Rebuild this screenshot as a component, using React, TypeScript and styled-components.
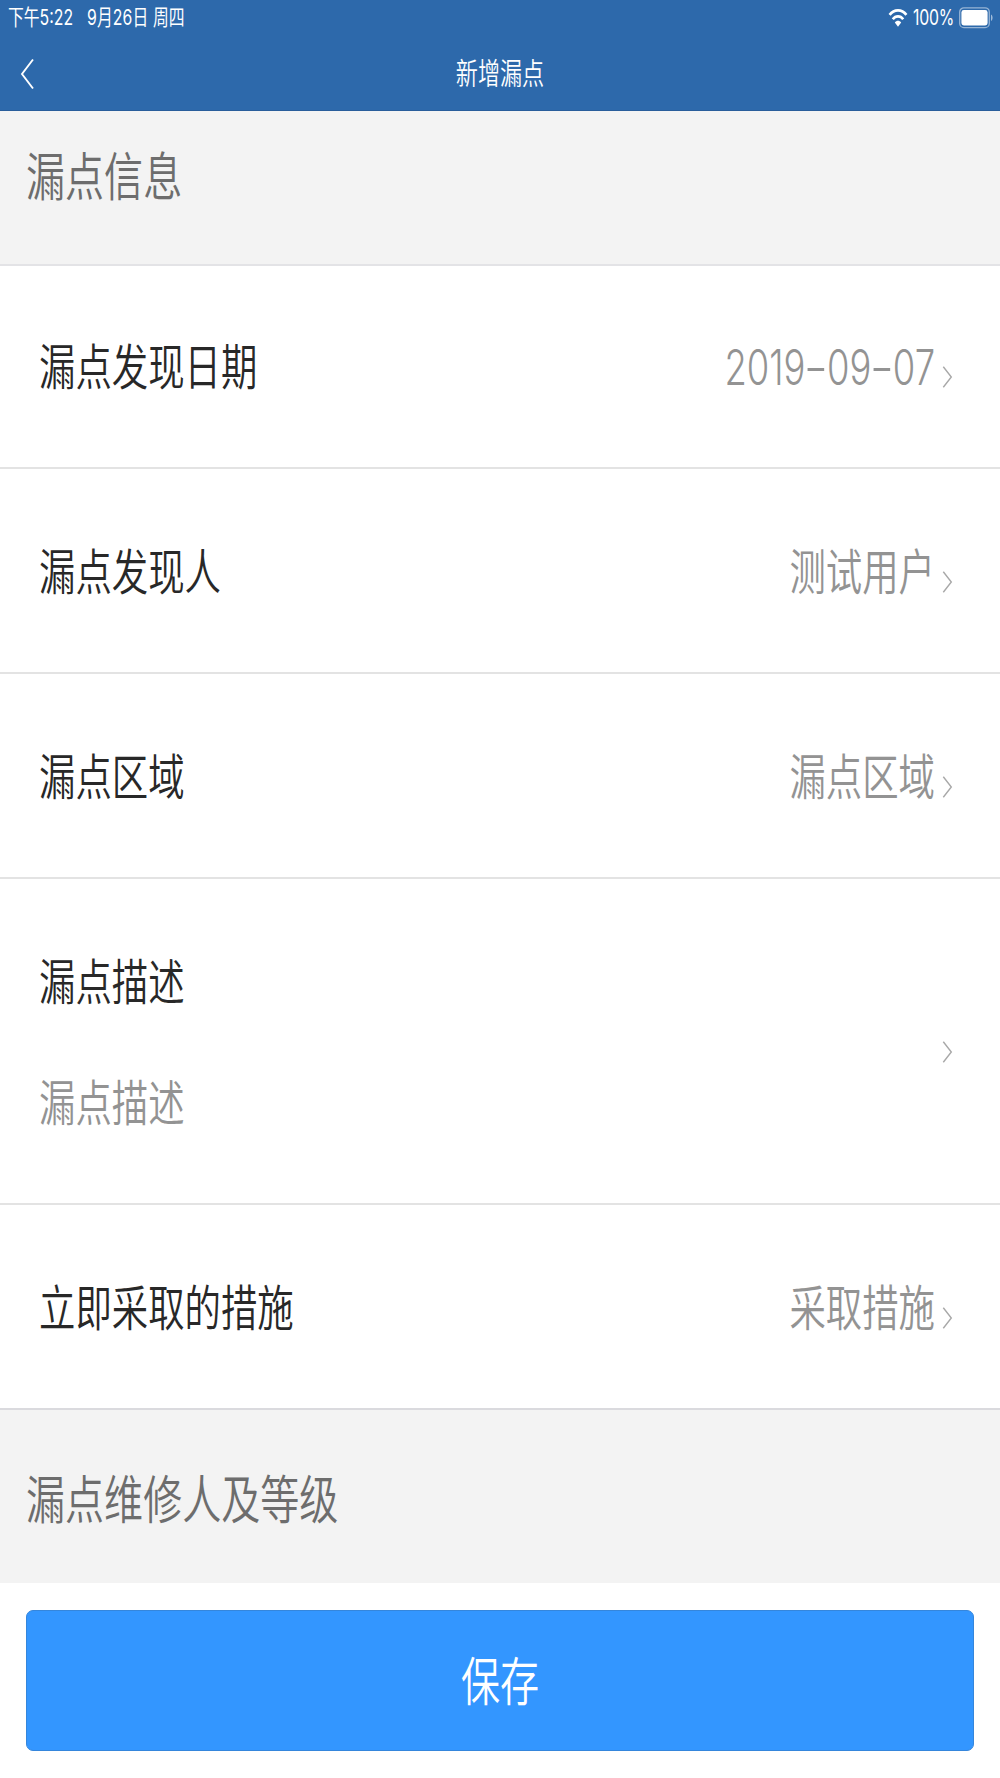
import React from "react";
import styled, { createGlobalStyle, css } from "styled-components";

const GlobalStyle = createGlobalStyle`
  *, *::before, *::after { box-sizing: border-box; }
  body { margin: 0; background: #fff; }
`;

const cjk = `"Noto Sans CJK SC", "Noto Sans", sans-serif`;

/* The interface is drawn with tall letterforms: every text run is stretched 4:3 vertically. */
const tall = css`
  display: block;
  white-space: nowrap;
  transform: scaleY(1.3333);
  transform-origin: 50% 50%;
`;

const Screen = styled.div`
  width: 1000px;
  height: 1778px;
  display: flex;
  flex-direction: column;
  overflow: hidden;
  background: #fff;
  font-family: ${cjk};
  font-weight: 350;
`;

const Header = styled.header`
  height: 111px;
  flex: none;
  background: #2d69ab;
  border-bottom: 1px solid #295d9b;
  color: #fff;
`;

const StatusBar = styled.div`
  height: 35px;
  padding: 0 6px 0 8px;
  display: flex;
  align-items: center;
  justify-content: space-between;
`;

const StatusGroup = styled.div<{ $gap: number }>`
  display: flex;
  align-items: center;
  gap: ${(p) => p.$gap}px;
`;

const StatusText = styled.span<{ $spacing?: number }>`
  ${tall}
  font-family: Inter, ${cjk};
  font-size: 15.8px;
  font-weight: 400;
  line-height: 21px;
  letter-spacing: ${(p) => p.$spacing ?? 0}px;
`;

const NavBar = styled.div`
  height: 75px;
  padding: 0 20px;
  display: grid;
  grid-template-columns: 60px 1fr 60px;
  align-items: start;
`;

const BackButton = styled.button`
  padding: 0;
  margin-top: 23px;
  width: 15px;
  height: 32px;
  border: 0;
  background: none;
  color: #fff;
  display: flex;
`;

const NavTitle = styled.h1`
  ${tall}
  margin: 19px 0 0;
  font-size: 22.1px;
  font-weight: 350;
  line-height: 34px;
  text-align: center;
`;

const Section = styled.div<{ $height: number; $top: number; $line?: boolean }>`
  height: ${(p) => p.$height}px;
  flex: none;
  padding: ${(p) => p.$top}px 26px 0;
  background: #f3f3f3;
  border-bottom: ${(p) => (p.$line ? "2px solid #e3e3e6" : "0")};
`;

const SectionTitle = styled.h2`
  ${tall}
  margin: 0;
  font-size: 39.06px;
  font-weight: 350;
  line-height: 52px;
  color: #6d6d6d;
`;

const Row = styled.div<{ $height: number; $top?: number; $last?: boolean }>`
  height: ${(p) => p.$height}px;
  flex: none;
  padding: ${(p) => p.$top ?? 76}px 47px 0 39px;
  display: flex;
  align-items: flex-start;
  border-bottom: 2px solid ${(p) => (p.$last ? "#dadade" : "#e3e3e3")};
`;

const LabelStack = styled.div`
  flex: 1;
  display: flex;
  flex-direction: column;
  gap: 73px;
`;

const Label = styled.span`
  ${tall}
  font-size: 36.4px;
  line-height: 48px;
  color: #282828;
`;

const Value = styled.span<{ $numeric?: boolean }>`
  ${tall}
  font-family: ${(p) => (p.$numeric ? `Inter, ${cjk}` : cjk)};
  font-size: 36.4px;
  line-height: ${(p) => (p.$numeric ? 57 : 48)}px;
  font-feature-settings: ${(p) => (p.$numeric ? `"calt" 0` : "normal")};
  color: #939393;
`;

const Dash = styled.span`
  display: inline-block;
  width: 21.5px;
  text-align: center;
  transform: scaleX(1.5);
`;

const ChevronBox = styled.span<{ $drop?: number }>`
  flex: none;
  width: 11px;
  height: 22px;
  margin: ${(p) => p.$drop ?? 26}px 0 0 7px;
  display: flex;
  color: #a8a8a8;
`;

const Footer = styled.footer`
  flex: 1;
  padding: 27px 26px;
  background: #fff;
`;

const SaveButton = styled.button`
  width: 948px;
  height: 141px;
  padding: 0 0 5px;
  display: flex;
  align-items: center;
  justify-content: center;
  border: 1px solid #3586dc;
  border-radius: 7px;
  background: #3396ff;
  color: #fff;
  font-family: ${cjk};
`;

const SaveText = styled.span`
  ${tall}
  font-size: 39.06px;
  font-weight: 350;
  line-height: 52px;
`;

const Chevron = ({ drop }: { drop?: number }) => (
  <ChevronBox $drop={drop}>
    <svg width="11" height="22" viewBox="0 0 11 22" fill="none">
      <path d="M1.3 0.8 L9.3 11 L1.3 21.2" stroke="currentColor" strokeWidth="1.4" />
    </svg>
  </ChevronBox>
);

const WifiIcon = () => (
  <svg width="20" height="20" viewBox="0 0 20 20" fill="none">
    <path d="M1.6 6.8 C6.2 0.9 13.8 0.9 18.4 6.8" stroke="#fff" strokeWidth="2.7" />
    <path d="M4.8 11.2 C7.6 7.4 12.4 7.4 15.2 11.2" stroke="#fff" strokeWidth="2.6" />
    <path d="M10 18.8 L6.8 14.5 C8.6 12.2 11.4 12.2 13.2 14.5 Z" fill="#fff" />
  </svg>
);

const BatteryIcon = () => (
  <svg width="35" height="22" viewBox="0 0 35 22" fill="none">
    <rect x="0.7" y="0.8" width="29.6" height="19.8" rx="4.2" stroke="#fff" strokeOpacity="0.5" strokeWidth="1.3" />
    <rect x="2.4" y="3" width="26.2" height="15.4" rx="2.4" fill="#fff" />
    <path d="M32 7.4 C34.1 8.6 34.1 12.8 32 14 Z" fill="#fff" fillOpacity="0.55" />
  </svg>
);

type Item = { label: string; value: string; height: number; top?: number; numeric?: boolean; last?: boolean };

const topItems: Item[] = [
  { label: "漏点发现日期", value: "2019-09-07", height: 203, top: 74, numeric: true },
  { label: "漏点发现人", value: "测试用户", height: 205 },
  { label: "漏点区域", value: "漏点区域", height: 205 },
];

const DateText = ({ value }: { value: string }) => (
  <>
    {value.split("-").map((part, index) => (
      <React.Fragment key={index}>
        {index > 0 && <Dash>-</Dash>}
        {part}
      </React.Fragment>
    ))}
  </>
);

const FieldRow = ({ item }: { item: Item }) => (
  <Row $height={item.height} $top={item.top} $last={item.last}>
    <LabelStack>
      <Label>{item.label}</Label>
    </LabelStack>
    <Value $numeric={item.numeric}>{item.numeric ? <DateText value={item.value} /> : item.value}</Value>
    <Chevron />
  </Row>
);

export default function App() {
  return (
    <>
      <GlobalStyle />
      <Screen>
        <Header>
          <StatusBar>
            <StatusGroup $gap={14}>
              <StatusText>下午5:22</StatusText>
              <StatusText $spacing={0.1}>9月26日 周四</StatusText>
            </StatusGroup>
            <StatusGroup $gap={5}>
              <WifiIcon />
              <StatusText $spacing={-0.2}>100%</StatusText>
              <BatteryIcon />
            </StatusGroup>
          </StatusBar>
          <NavBar>
            <BackButton aria-label="返回">
              <svg width="15" height="32" viewBox="0 0 15 32" fill="none">
                <path d="M13 1.5 L2 16 L13 30.5" stroke="currentColor" strokeWidth="1.9" />
              </svg>
            </BackButton>
            <NavTitle>新增漏点</NavTitle>
          </NavBar>
        </Header>

        <Section $height={155} $top={36} $line>
          <SectionTitle>漏点信息</SectionTitle>
        </Section>

        {topItems.map((item) => (
          <FieldRow key={item.label} item={item} />
        ))}

        <Row $height={326}>
          <LabelStack>
            <Label>漏点描述</Label>
            <Value>漏点描述</Value>
          </LabelStack>
          <Chevron drop={86} />
        </Row>

        <FieldRow item={{ label: "立即采取的措施", value: "采取措施", height: 205, last: true }} />

        <Section $height={173} $top={60}>
          <SectionTitle>漏点维修人及等级</SectionTitle>
        </Section>

        <Footer>
          <SaveButton>
            <SaveText>保存</SaveText>
          </SaveButton>
        </Footer>
      </Screen>
    </>
  );
}
